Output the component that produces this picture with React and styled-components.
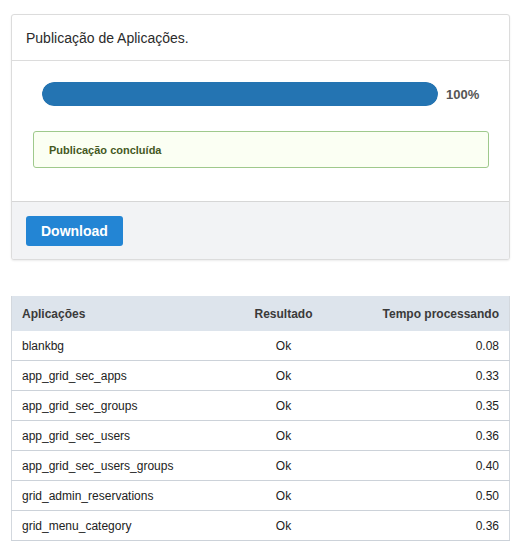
import React from "react";
import styled, { createGlobalStyle } from "styled-components";

const Global = createGlobalStyle`
  html, body { margin: 0; padding: 0; background: #fff; }
  body { font-family: "Liberation Sans", Arial, sans-serif; color: #333; }
`;

const Page = styled.div`
  padding: 14px 7px 0 11px;
  display: flex;
  flex-direction: column;
  gap: 36px;
`;

const Card = styled.div`
  border: 1px solid #dcdcdc;
  border-radius: 3px;
  box-shadow: 0 1px 2px rgba(0, 0, 0, 0.08);
  background: #fff;
  overflow: hidden;
`;

const CardHeader = styled.div`
  height: 45px;
  display: flex;
  align-items: center;
  padding: 0 14px;
  font-size: 14px;
  color: #2b2b2b;
  border-bottom: 1px solid #dcdcdc;
`;

const CardBody = styled.div`
  padding: 21px 20px 33px 21px;
  display: flex;
  flex-direction: column;
  gap: 25px;
`;

const ProgressRow = styled.div`
  display: flex;
  align-items: center;
  gap: 8px;
  margin: 0 8px 0 9px;
`;

const Track = styled.div`
  flex: 1;
  height: 24px;
  border-radius: 12px;
  background: #e8e8e8;
  overflow: hidden;
`;

const Fill = styled.div`
  height: 100%;
  background: #2474b2;
  border-radius: 12px;
`;

const Percent = styled.span`
  font-size: 13px;
  font-weight: bold;
  color: #555;
  width: 35px;
`;

const Alert = styled.div`
  height: 35px;
  display: flex;
  align-items: center;
  padding: 0 15px;
  background: #fbfff3;
  border: 1px solid #9fc98c;
  border-radius: 3px;
  font-size: 11px;
  font-weight: bold;
  color: #45591f;
`;

const CardFooter = styled.div`
  background: #f2f3f5;
  border-top: 1px solid #d6d6d6;
  padding: 14px 14px 13px;
  display: flex;
`;

const Button = styled.button`
  height: 30px;
  padding: 0 15px;
  border: none;
  border-radius: 3px;
  background: #2385d4;
  color: #fff;
  font-family: "Liberation Sans", Arial, sans-serif;
  font-size: 14px;
  font-weight: bold;
  cursor: pointer;
`;

const Table = styled.table`
  width: 100%;
  border-collapse: collapse;
  table-layout: fixed;
  font-size: 12px;
  border-left: 1px solid #d3d8de;
  border-right: 1px solid #d3d8de;
`;

const Th = styled.th`
  background: #dde4ec;
  height: 35px;
  padding: 0 10px;
  font-weight: bold;
  color: #3a3a3a;
  text-align: ${(p) => p.$align || "left"};
`;

const Td = styled.td`
  height: 29px;
  padding: 0 10px;
  color: #222;
  border-bottom: 1px solid #ccd2d9;
  text-align: ${(p) => p.$align || "left"};
`;

const rows = [
  ["blankbg", "Ok", "0.08"],
  ["app_grid_sec_apps", "Ok", "0.33"],
  ["app_grid_sec_groups", "Ok", "0.35"],
  ["app_grid_sec_users", "Ok", "0.36"],
  ["app_grid_sec_users_groups", "Ok", "0.40"],
  ["grid_admin_reservations", "Ok", "0.50"],
  ["grid_menu_category", "Ok", "0.36"],
];

export default function App() {
  return (
    <>
      <Global />
      <Page>
        <Card>
          <CardHeader>Publicação de Aplicações.</CardHeader>
          <CardBody>
            <ProgressRow>
              <Track>
                <Fill style={{ width: "100%" }} />
              </Track>
              <Percent>100%</Percent>
            </ProgressRow>
            <Alert>Publicação concluída</Alert>
          </CardBody>
          <CardFooter>
            <Button>Download</Button>
          </CardFooter>
        </Card>
        <Table>
          <colgroup>
            <col style={{ width: "222px" }} />
            <col style={{ width: "100px" }} />
            <col />
          </colgroup>
          <thead>
            <tr>
              <Th>Aplicações</Th>
              <Th $align="center">Resultado</Th>
              <Th $align="right">Tempo processando</Th>
            </tr>
          </thead>
          <tbody>
            {rows.map((r) => (
              <tr key={r[0]}>
                <Td>{r[0]}</Td>
                <Td $align="center">{r[1]}</Td>
                <Td $align="right">{r[2]}</Td>
              </tr>
            ))}
          </tbody>
        </Table>
      </Page>
    </>
  );
}
